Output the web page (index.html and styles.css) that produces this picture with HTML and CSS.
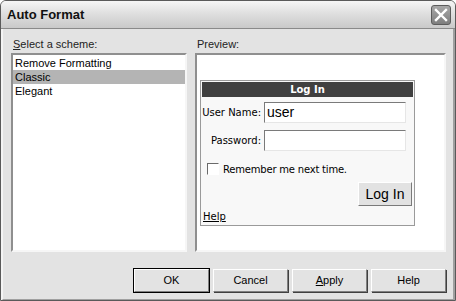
FILE: index.html
```html
<!DOCTYPE html>
<html>
<head>
<meta charset="utf-8">
<link rel="stylesheet" href="styles.css">
</head>
<body>
<div class="window">
  <div class="titlebar">
    <span class="title">Auto Format</span>
    <span class="close">
      <svg width="16" height="16" viewBox="0 0 16 16"><path d="M3 3 L13 13 M13 3 L3 13" stroke="#fff" stroke-width="2.4" stroke-linecap="square"/></svg>
    </span>
  </div>
  <div class="content">
    <div class="main">
      <div class="col left">
        <div class="label"><u>S</u>elect a scheme:</div>
        <div class="list">
          <div class="item">Remove Formatting</div>
          <div class="item sel">Classic</div>
          <div class="item">Elegant</div>
        </div>
      </div>
      <div class="col right">
        <div class="label">Preview:</div>
        <div class="preview">
          <div class="login">
            <div class="lhead">Log In</div>
            <div class="row">
              <span class="flabel">User Name:</span>
              <span class="input big">user</span>
            </div>
            <div class="row">
              <span class="flabel pw">Password:</span>
              <span class="input"></span>
            </div>
            <div class="check"><span class="box"></span>Remember me next time.</div>
            <div class="btnrow"><span class="lbtn">Log In</span></div>
            <div class="help">Help</div>
          </div>
        </div>
      </div>
    </div>
    <div class="buttons">
      <span class="btn def">OK</span>
      <span class="btn">Cancel</span>
      <span class="btn"><u>A</u>pply</span>
      <span class="btn">Help</span>
    </div>
  </div>
</div>
</body>
</html>
```
FILE: styles.css
```css
html, body { margin: 0; padding: 0; background: #fff; }
body { font-family: "Liberation Sans", Arial, sans-serif; font-size: 11px; color: #000; }
.window {
  width: 456px; height: 301px; box-sizing: border-box;
  border: 1px solid #5a5a5a; border-radius: 6px 6px 0 0;
  background: #e3e3e3; display: flex; flex-direction: column; overflow: hidden;
}
.titlebar {
  height: 27px; flex: none; display: flex; align-items: center; justify-content: space-between;
  padding: 0 4px 0 6px;
  background: linear-gradient(#f6f6f6, #e2e2e2 40%, #c9c9c9);
  border-bottom: 1px solid #8a8a8a;
}
.title { font-weight: bold; font-size: 13px; color: #111; }
.close {
  width: 20px; height: 20px; box-sizing: border-box; border: 1px solid #5c5c5c; border-radius: 3px;
  background: linear-gradient(#a8a8a8, #7e7e7e); display: flex; align-items: center; justify-content: center;
}
.content {
  flex: 1; display: flex; flex-direction: column;
  border-left: 2px solid #f4f4f4; border-right: 2px solid #a0a0a0; border-bottom: 2px solid #a0a0a0;
  padding: 8px 7px 7px 8px;
}
.main { display: flex; gap: 8px; }
.col { display: flex; flex-direction: column; }
.left { width: 176px; }
.right { flex: 1; }
.label { height: 16px; line-height: 14px; padding-left: 2px; color: #222; }
.list, .preview {
  height: 199px; box-sizing: border-box; background: #fff;
  border: 2px solid; border-color: #8f8f8f #f6f6f6 #f6f6f6 #8f8f8f;
}
.list { padding-top: 1px; }
.item { height: 14px; line-height: 14px; padding-left: 2px; }
.item.sel { background: #b4b4b4; }
.preview { padding: 25px 0 0 3px; }
.login {
  width: 215px; height: 146px; box-sizing: border-box; background: #f8f8f8;
  border: 1px solid #9a9a9a; padding: 1px 1px 0 1px;
  font-family: "DejaVu Sans", Verdana, sans-serif; font-size: 10px;
}
.lhead { height: 15px; line-height: 15px; background: #404040; color: #fff; font-weight: bold; text-align: center; font-size: 10px; }
.row { display: flex; align-items: center; margin-top: 5px; height: 21px; }
.row + .row { margin-top: 7px; }
.flabel { width: 62px; text-align: right; padding-right: 3px; box-sizing: border-box; }
.input {
  width: 142px; height: 21px; box-sizing: border-box; background: #fff;
  border: 1px solid; border-color: #7a7a7a #e6e6e6 #e6e6e6 #7a7a7a;
  line-height: 19px; padding-left: 2px; font-family: "Liberation Sans", Arial, sans-serif;
}
.input.big { font-size: 14px; }
.check { display: flex; align-items: center; margin: 11px 0 0 5px; height: 14px; letter-spacing: -0.2px; }
.box { width: 12px; height: 12px; box-sizing: border-box; border: 1px solid; border-color: #6a6a6a #fff #fff #6a6a6a; background: #fff; margin-right: 4px; }
.btnrow { display: flex; justify-content: flex-end; margin-top: 6px; padding-right: 1px; }
.lbtn {
  width: 54px; height: 24px; box-sizing: border-box; background: #e2e2e2;
  border: 1px solid; border-color: #fff #7a7a7a #7a7a7a #fff;
  font-family: "Liberation Sans", Arial, sans-serif; font-size: 14px; text-align: center; line-height: 22px;
}
.help { margin: 5px 0 0 1px; text-decoration: underline; font-size: 10px; }
.buttons { display: flex; justify-content: flex-end; gap: 4px; margin-top: 17px; }
.btn {
  width: 75px; height: 23px; box-sizing: border-box; background: #e3e3e3;
  border: 1px solid; border-color: #fff #808080 #808080 #fff; box-shadow: 1px 1px 0 #404040;
  text-align: center; line-height: 21px; font-size: 11px;
}
.btn.def { outline: 1px solid #000; }
```
